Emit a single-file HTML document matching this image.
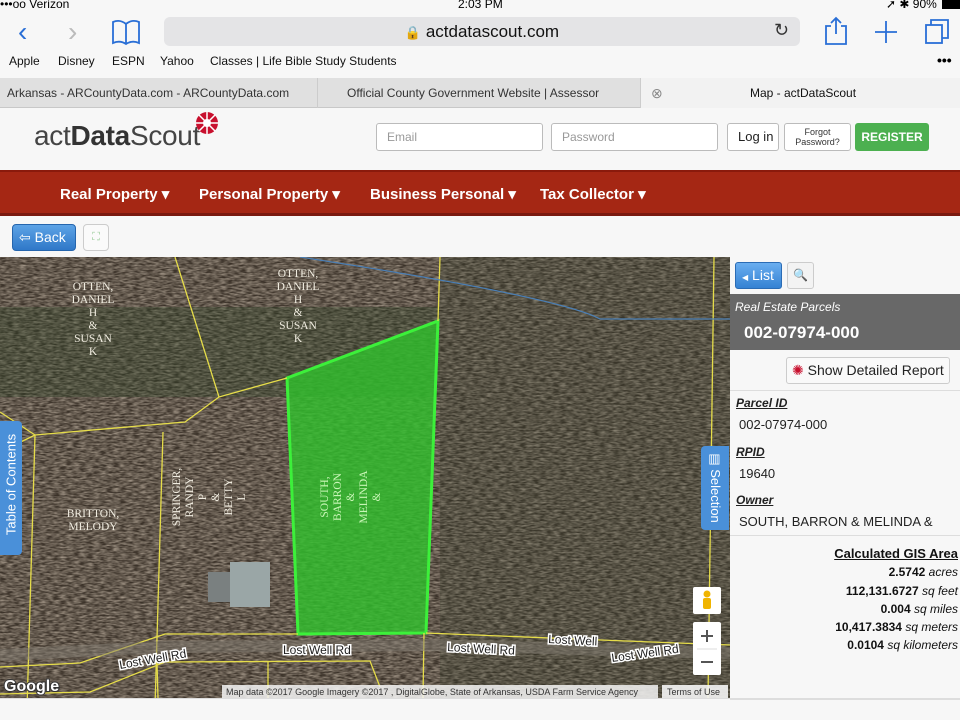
<!DOCTYPE html>
<html style="overflow:hidden"><head><meta charset="utf-8">
<style>
*{margin:0;padding:0;box-sizing:border-box}
body{width:960px;height:720px;overflow:hidden;background:#f7f7f7;font-family:"Liberation Sans",sans-serif;position:relative}
.abs{position:absolute;white-space:nowrap}
.status{top:0;left:0;width:960px;height:12px;font-size:12px;color:#000;background:#f7f7f7}
.url{left:164px;top:17px;width:636px;height:29px;background:#e4e4e6;border-radius:6px;font-size:17px;text-align:center;line-height:29px;color:#111}
.bm{top:54px;font-size:12px;color:#111}
.tabs{top:78px;left:0;width:960px;height:30px;background:#e0e0e0;border-bottom:1px solid #c8c8c8;font-size:12px;color:#333}
.tab{position:absolute;top:0;height:30px;line-height:30px;border-right:1px solid #ccc}
.hdr{top:108px;left:0;width:960px;height:62px;background:#f7f7f7}
.inp{position:absolute;top:123px;height:28px;background:#fff;border:1px solid #bbb;border-radius:3px;font-size:12px;color:#999;padding-left:10px;line-height:26px;white-space:nowrap}
.nav{top:170px;left:0;width:960px;height:46px;background:#a52714;border-top:2px solid #8a1a0c;border-bottom:3px solid #7a1a10;color:#fff;font-weight:bold;font-size:15px}
.nav span{position:absolute;top:13px}
.panel{left:730px;top:257px;width:230px;height:441px;background:#f7f7f7}
.lbl{position:absolute;left:6px;font-size:12px;font-style:italic;font-weight:bold;text-decoration:underline;color:#222}
.val{position:absolute;left:9px;font-size:13px;color:#222;white-space:nowrap}
.ar{position:absolute;right:2px;font-size:12px;font-weight:bold;color:#111;text-align:right;white-space:nowrap}
.ar i{font-weight:normal}
</style></head><body>
<div class="abs status"><span style="position:absolute;left:0;top:-3px">•••oo Verizon</span><span style="position:absolute;left:458px;top:-3px">2:03 PM</span><span style="position:absolute;left:886px;top:-3px">➚ ✱ 90%</span><span style="position:absolute;left:942px;top:0;width:18px;height:9px;background:#000"></span></div>
<div class="abs" style="left:18px;top:16px;font-size:28px;color:#2a6fd6">&#x2039;</div>
<div class="abs" style="left:68px;top:16px;font-size:28px;color:#bbb">&#x203A;</div>
<svg class="abs" style="left:110px;top:18px" width="32" height="28"><path d="M3 4 Q10 1 16 6 Q22 1 29 4 V25 Q22 22 16 26 Q10 22 3 25Z M16 6V26" fill="none" stroke="#2a6fd6" stroke-width="1.8"/></svg>
<div class="abs url"><span style="font-size:13px">🔒</span> actdatascout.com</div>
<div class="abs" style="left:774px;top:20px;font-size:18px;color:#333">↻</div>
<svg class="abs" style="left:822px;top:16px" width="28" height="30"><path d="M9 10H4V28H24V10H19M14 2V18M9 7L14 2L19 7" fill="none" stroke="#2a6fd6" stroke-width="1.8"/></svg>
<svg class="abs" style="left:874px;top:20px" width="24" height="24"><path d="M12 1V23M1 12H23" stroke="#2a6fd6" stroke-width="1.8"/></svg>
<svg class="abs" style="left:924px;top:17px" width="28" height="28"><rect x="2" y="8" width="16" height="18" fill="none" stroke="#2a6fd6" stroke-width="1.8"/><path d="M7 8V3H24V21H18" fill="none" stroke="#2a6fd6" stroke-width="1.8"/></svg>
<div class="abs bm" style="left:9px">Apple</div><div class="abs bm" style="left:58px">Disney</div><div class="abs bm" style="left:112px">ESPN</div><div class="abs bm" style="left:160px">Yahoo</div><div class="abs bm" style="left:210px">Classes | Life Bible Study Students</div>
<div class="abs" style="left:937px;top:52px;font-size:14px;font-weight:bold">•••</div>
<div class="abs tabs">
<div class="tab" style="left:0;width:318px;padding-left:7px">Arkansas - ARCountyData.com - ARCountyData.com</div>
<div class="tab" style="left:318px;width:323px;padding-left:29px">Official County Government Website | Assessor</div>
<div class="tab" style="left:641px;width:319px;background:#f2f2f2;border:none"><span style="position:absolute;left:10px;color:#888;font-size:14px">⊗</span><span style="position:absolute;left:109px;color:#111">Map - actDataScout</span></div>
</div>
<div class="abs hdr"></div>
<div class="abs" style="left:34px;top:120px;font-size:28px;color:#444;letter-spacing:-0.3px">act<b style="color:#333">Data</b>Scout</div>
<div class="abs" style="left:34px;top:140px;font-size:28px;color:#ccc;transform:scaleY(-0.5);transform-origin:0 100%;opacity:.5">act<b>Data</b>Scout</div>
<svg class="abs" style="left:194px;top:110px" width="26" height="26"><circle cx="13" cy="13" r="11" fill="#c8102e"/><circle cx="13" cy="13" r="4" fill="#fff"/><path d="M13 2V24M2 13H24M5 5L21 21M21 5L5 21" stroke="#fff" stroke-width="1.5"/></svg>
<div class="inp" style="left:376px;width:167px">Email</div>
<div class="inp" style="left:551px;width:167px">Password</div>
<div class="inp" style="left:727px;width:52px;color:#222;font-size:13px;padding-left:10px">Log in</div>
<div class="inp" style="left:784px;width:67px;color:#333;font-size:9px;line-height:10px;padding:3px 0 0;text-align:center">Forgot<br>Password?</div>
<div class="abs" style="left:855px;top:123px;width:74px;height:28px;background:#4cb050;border-radius:3px;color:#fff;font-size:12px;font-weight:bold;text-align:center;line-height:28px">REGISTER</div>
<div class="abs nav"><span style="left:60px">Real Property ▾</span><span style="left:199px">Personal Property ▾</span><span style="left:370px">Business Personal ▾</span><span style="left:540px">Tax Collector ▾</span></div>
<div class="abs" style="left:0;top:216px;width:960px;height:41px;background:#f7f7f7"></div>
<div class="abs" style="left:12px;top:224px;width:64px;height:27px;background:linear-gradient(#5da3e6,#2f78c8);border:1px solid #2565ad;border-radius:4px;color:#fff;font-size:14px;line-height:25px;padding-left:6px">⇦ Back</div>
<div class="abs" style="left:83px;top:224px;width:26px;height:27px;background:#fafafa;border:1px solid #ccc;border-radius:4px;color:#9c9;font-size:11px;text-align:center;line-height:25px">⛶</div>
<svg class="abs" style="left:0;top:257px" width="730" height="441" font-family="Liberation Serif,serif">
<defs>
<filter id="n"><feTurbulence type="fractalNoise" baseFrequency="0.15 0.6" numOctaves="2" seed="3"/><feColorMatrix values="0 0 0 0 0.55  0 0 0 0 0.47  0 0 0 0 0.38  0 0 0 -1.6 1.2"/></filter>
</defs>
<rect width="730" height="441" fill="#3b3229"/>
<rect width="730" height="441" filter="url(#n)" opacity=".75"/>
<rect x="0" y="50" width="440" height="90" fill="#2f4428" opacity=".35"/>
<rect x="440" y="0" width="290" height="441" fill="#34402c" opacity=".25"/>
<polygon points="287,121 438,64 426,376 298,377" fill="#2fc22c" opacity=".8"/>
<polygon points="287,121 438,64 426,376 298,377" fill="none" stroke="#3cf03a" stroke-width="3"/>
<g fill="none" stroke="#e6dd4a" stroke-width="1.3">
<path d="M175,0 L219,140 L287,121"/><path d="M219,140 L185,165 L35,178 L0,155"/><path d="M35,178 L0,195"/><path d="M35,178 L25,520"/><path d="M163,175 L155,450"/>
<path d="M440,0 L438,64"/><path d="M714,0 L708,441"/>
<path d="M0,410 L80,406 L165,377 L298,377"/><path d="M426,376 L600,383 L730,388"/>
<path d="M0,437 L90,435 L165,405 L370,404 L380,430"/><path d="M157,406 L158,441"/><path d="M268,405 L268,441"/><path d="M424,376 L423,441"/>
</g>
<path d="M0,398 L165,390 L425,388 L730,396" stroke="#7f7a70" stroke-width="12" fill="none" opacity=".5"/>
<path d="M300,0 Q560,40 600,62 L730,62" stroke="#4b7fb5" stroke-width="1.2" fill="none"/>
<rect x="230" y="305" width="40" height="45" fill="#9aa6a6"/><rect x="208" y="315" width="22" height="30" fill="#7a8080"/>
<g fill="#f0ece0" font-size="11.5" text-anchor="middle">
<text x="93" y="33">OTTEN,</text><text x="93" y="46">DANIEL</text><text x="93" y="59">H</text><text x="93" y="72">&amp;</text><text x="93" y="85">SUSAN</text><text x="93" y="98">K</text>
<text x="298" y="20">OTTEN,</text><text x="298" y="33">DANIEL</text><text x="298" y="46">H</text><text x="298" y="59">&amp;</text><text x="298" y="72">SUSAN</text><text x="298" y="85">K</text>
<text x="93" y="260">BRITTON,</text><text x="93" y="273">MELODY</text>
</g>
<g fill="#f0ece0" font-size="11.5" text-anchor="middle" transform="rotate(-90 220 240)">
<text x="220" y="200">SPRINGER,</text><text x="220" y="213">RANDY</text><text x="220" y="226">P</text><text x="220" y="239">&amp;</text><text x="220" y="252">BETTY</text><text x="220" y="265">L</text>
</g>
<g fill="#c7f5b5" font-size="11.5" text-anchor="middle" transform="rotate(-90 355 240)">
<text x="355" y="213">SOUTH,</text><text x="355" y="226">BARRON</text><text x="355" y="239">&amp;</text><text x="355" y="252">MELINDA</text><text x="355" y="265">&amp;</text>
</g>
<g font-family="Liberation Sans,sans-serif" font-size="12" fill="#222" stroke="#fff" stroke-width="3" paint-order="stroke">
<text x="120" y="412" transform="rotate(-10 120 412)">Lost Well Rd</text>
<text x="283" y="397">Lost Well Rd</text>
<text x="447" y="394" transform="rotate(3 447 394)">Lost Well Rd</text>
<text x="548" y="386" transform="rotate(3 548 386)">Lost Well</text>
<text x="612" y="405" transform="rotate(-8 612 405)">Lost Well Rd</text>
<text x="4" y="434" font-size="16" font-weight="bold" fill="#fff" stroke="#333" stroke-width="2">Google</text>
</g>
<rect x="222" y="428" width="436" height="13" fill="#f5f5f5" opacity=".85"/>
<text x="226" y="438" font-family="Liberation Sans,sans-serif" font-size="9" fill="#333">Map data ©2017 Google Imagery ©2017 , DigitalGlobe, State of Arkansas, USDA Farm Service Agency</text>
<rect x="662" y="428" width="66" height="13" fill="#f5f5f5" opacity=".9"/>
<text x="667" y="438" font-family="Liberation Sans,sans-serif" font-size="9" fill="#333">Terms of Use</text>
<rect x="693" y="330" width="28" height="27" rx="2" fill="#fff"/>
<circle cx="707" cy="337" r="3.5" fill="#f0b400"/><rect x="703" y="341" width="8" height="11" rx="2" fill="#f0b400"/>
<rect x="693" y="365" width="28" height="53" rx="2" fill="#fff"/>
<path d="M707,373V385M701,379H713M701,405H713" stroke="#555" stroke-width="2"/><path d="M697,392H717" stroke="#ddd"/>
</svg>
<div class="abs" style="left:0;top:421px;width:22px;height:134px;background:#4a90d9;border-radius:0 4px 4px 0;overflow:hidden"><div style="position:absolute;left:-54px;top:56px;width:130px;transform:rotate(-90deg);color:#fff;font-size:13px;text-align:center">Table of Contents</div></div>
<div class="abs" style="left:701px;top:446px;width:28px;height:84px;background:#4a90d9;border-radius:4px 0 0 4px;overflow:hidden"><div style="position:absolute;left:-31px;top:34px;width:90px;transform:rotate(90deg);color:#fff;font-size:13px;text-align:center">▤ Selection</div></div>
<div class="abs panel">
<div class="abs" style="left:5px;top:5px;width:47px;height:27px;background:linear-gradient(#6aaef0,#3582d3);border:1px solid #2b6cb5;border-radius:3px;color:#fff;font-size:14px;line-height:25px;padding-left:6px"><span style="font-size:8px">◀</span> List</div>
<div class="abs" style="left:57px;top:5px;width:27px;height:27px;background:#f3f3f3;border:1px solid #ccc;border-radius:3px;font-size:12px;text-align:center;line-height:25px">🔍</div>
<div class="abs" style="left:0;top:37px;width:230px;height:56px;background:#686868"></div>
<div class="abs" style="left:5px;top:43px;font-size:12px;font-style:italic;color:#fff">Real Estate Parcels</div>
<div class="abs" style="left:14px;top:66px;font-size:17px;font-weight:bold;color:#fff">002-07974-000</div>
<div class="abs" style="left:56px;top:100px;width:164px;height:27px;background:#f9f9f9;border:1px solid #ccc;border-radius:3px;font-size:14px;color:#222;line-height:25px;padding-left:5px"><span style="color:#c8102e">✺</span> Show Detailed Report</div>
<div class="abs" style="left:0;top:133px;width:230px;height:1px;background:#ddd"></div>
<div class="lbl" style="top:139px">Parcel ID</div><div class="val" style="top:160px">002-07974-000</div>
<div class="lbl" style="top:188px">RPID</div><div class="val" style="top:209px">19640</div>
<div class="lbl" style="top:236px">Owner</div><div class="val" style="top:257px">SOUTH, BARRON &amp; MELINDA &amp;</div>
<div class="abs" style="left:0;top:278px;width:230px;height:1px;background:#ddd"></div>
<div class="ar" style="top:289px;font-size:13px;text-decoration:underline">Calculated GIS Area</div>
<div class="ar" style="top:308px">2.5742 <i>acres</i></div>
<div class="ar" style="top:327px">112,131.6727 <i>sq feet</i></div>
<div class="ar" style="top:345px">0.004 <i>sq miles</i></div>
<div class="ar" style="top:363px">10,417.3834 <i>sq meters</i></div>
<div class="ar" style="top:381px">0.0104 <i>sq kilometers</i></div>
<div class="abs" style="left:0;top:442px;width:230px;height:1px;background:#ddd"></div>
</div>
<div class="abs" style="left:0;top:698px;width:960px;height:1px;background:#ddd"></div>
</body></html>
